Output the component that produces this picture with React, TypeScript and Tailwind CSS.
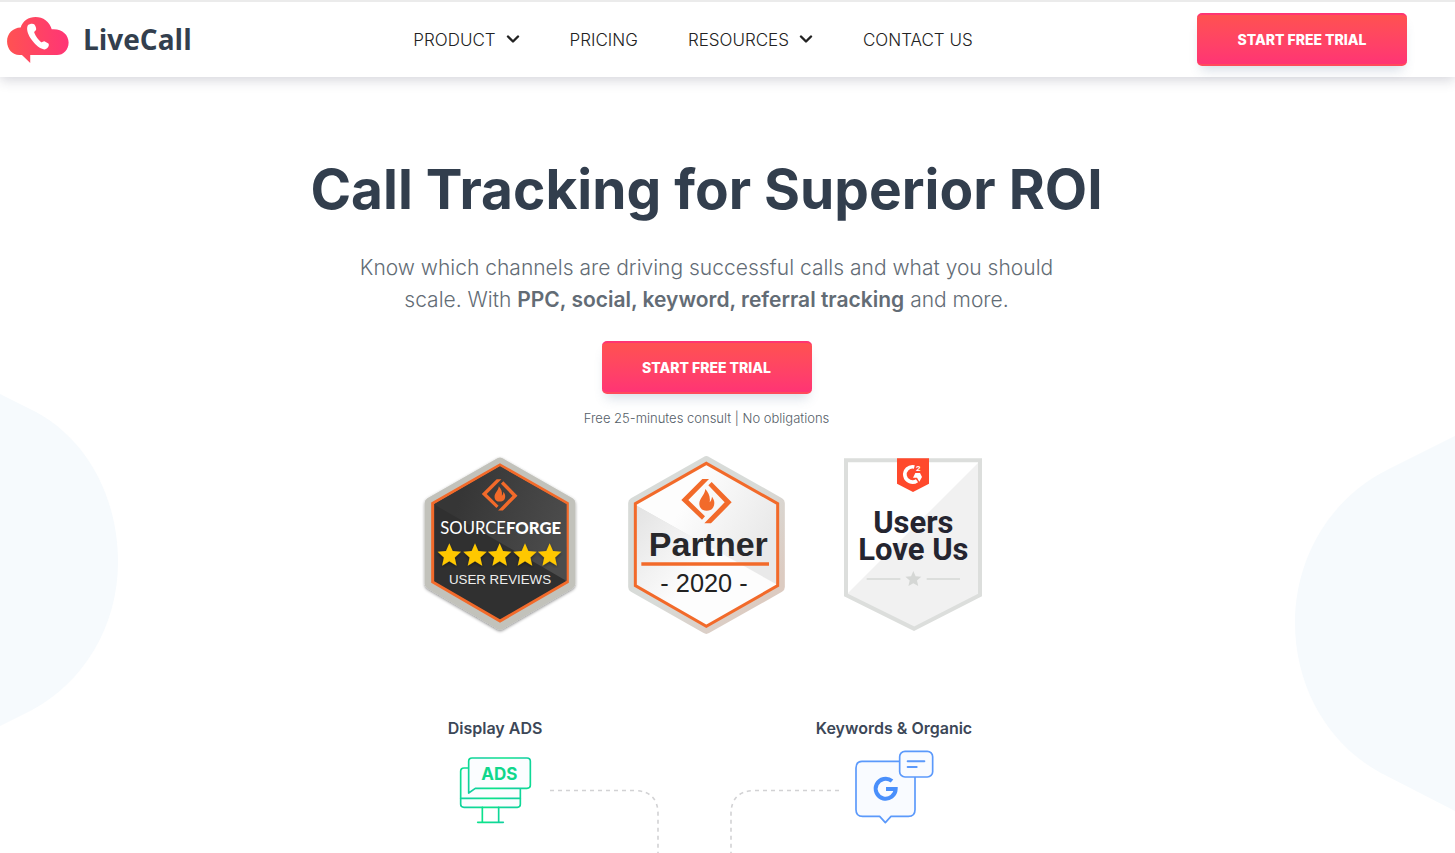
import React from "react";

function Chevron() {
  return (
    <svg width="14" height="9" viewBox="0 0 14 9" fill="none" aria-hidden="true">
      <path d="M2 1.500 7 6.500l5-5" stroke="#222" strokeWidth="2.400" strokeLinejoin="round" strokeLinecap="round" />
    </svg>
  );
}

function Logo() {
  return (
    <a href="#" className="flex items-center gap-3.5" aria-label="LiveCall">
      <svg width="62" height="46" viewBox="21 48 187 139" aria-hidden="true">
        <defs>
          <linearGradient id="cloud" x1="0" x2="1">
            <stop offset="0" stopColor="#ff5252" />
            <stop offset="1" stopColor="#ff3576" />
          </linearGradient>
        </defs>
        <path
          fill="url(#cloud)"
          d="M91 187 66 163h-8c-20 0-37-18-37-41 0-24 18-41 41-42 6-20 24-32 45-32 23 0 42 14 49 37 30-3 51 16 51 40 0 22-16 38-35 38H91Z"
        />
        <path
          fill="#fff"
          d="M84 73c5-5 15-6 19-3 4 5 6 10 6 15 0 4-7 6-6 10 4 11 13 23 21 29 4 2 6-4 11-2l11 6c4 6-2 16-11 18-20-1-50-35-53-58-1-6 0-11 2-15Z"
        />
      </svg>
      <span className="w-[106px] pb-0.5 font-['Open_Sans',sans-serif] text-[28px] leading-8 font-bold text-[#333f4e]">LiveCall</span>
    </a>
  );
}

function TrialButton() {
  return (
    <button
      type="button"
      className="h-[53px] w-[210px] cursor-pointer rounded-[5px] border-y-2 border-t-[#ff3472] border-b-[#ff4a5c] bg-linear-to-b from-[#ff5150] to-[#ff3474] text-[14px] font-extrabold text-white shadow-[0_8px_12px_-4px_rgba(70,100,140,0.22)]"
    >
      START FREE TRIAL
    </button>
  );
}

function Flame() {
  return (
    <g fill="#f26a2a">
      <path d="M262 102h20l-62 63 50 49-9 10-62-59Z" />
      <path d="m290 111 60 61-62 63h-20l61-63-49-51Z" />
      <path d="M271 132c-1 18-19 28-18 46 1 12 9 19 22 19 15 0 23-9 23-23 0-9-4-14-7-19-1 8-3 13-7 17 3-17-4-30-13-40Z" />
    </g>
  );
}

function star(cx: number, cy: number, r: number) {
  return Array.from({ length: 10 }, (_, i) => {
    const a = (Math.PI / 5) * i - Math.PI / 2;
    const d = i % 2 ? r * 0.46 : r;
    return `${cx + d * Math.cos(a)},${cy + d * Math.sin(a)}`;
  }).join(" ");
}

function ReviewsBadge() {
  return (
    <svg width="152" height="178" viewBox="42 33 456 534" className="overflow-visible" role="img" aria-label="SourceForge user reviews">
      <defs>
        <linearGradient id="dark" x1="0" y1="0.200" x2="1" y2="0.500">
          <stop offset="0.200" stopColor="#363636" />
          <stop offset="1" stopColor="#4c4c4c" />
        </linearGradient>
        <clipPath id="hexDark">
          <path d="m270 60 201 116v234L270 527 69 410V176Z" />
        </clipPath>
        <filter id="drop" x="-10%" y="-10%" width="120%" height="120%">
          <feDropShadow dx="0" dy="4" stdDeviation="4" floodOpacity="0.450" />
        </filter>
      </defs>
      <path filter="url(#drop)" d="m270 54 210 120v242L270 538 60 416V174Z" fill="#c2c2bb" stroke="#c2c2bb" strokeWidth="32" strokeLinejoin="round" />
      <path d="m270 60 202 115v236L270 528 68 411V175Z" fill="#303030" stroke="#f26a2a" strokeWidth="9" />
      <path clipPath="url(#hexDark)" d="M72 178 270 64l200 114v230Z" fill="url(#dark)" />
      <g transform="translate(74 30) scale(.71)">
        <Flame />
      </g>
      <text x="272" y="268" textAnchor="middle" fill="#fff" fontFamily="Lato, sans-serif" fontSize="50">
        SOURCE<tspan fontWeight="900">FORGE</tspan>
      </text>
      <g fill="#ffc800" filter="url(#drop)">
        {[118, 195, 269, 345, 419].map((x) => (
          <polygon key={x} points={star(x, 332, 37)} />
        ))}
      </g>
      <text x="270" y="417" textAnchor="middle" fill="#eee" fontFamily="'Liberation Sans', sans-serif" fontSize="40">
        USER REVIEWS
      </text>
    </svg>
  );
}

function PartnerBadge() {
  return (
    <svg width="157" height="178" viewBox="39 33 471 534" role="img" aria-label="SourceForge Partner 2020">
      <defs>
        <linearGradient id="rim" x1="0" y1="0" x2="1" y2="1">
          <stop offset="0.500" stopColor="#d8dbd8" />
          <stop offset="0.850" stopColor="#dccbc1" />
        </linearGradient>
        <linearGradient id="upper" x1="0" y1="0" x2="1" y2="0.500">
          <stop offset="0.400" stopColor="#fdfdfd" />
          <stop offset="1" stopColor="#e9e9e9" />
        </linearGradient>
        <linearGradient id="lower" x1="0" y1="0" x2="0.700" y2="0.500">
          <stop offset="0" stopColor="#e2e2e2" />
          <stop offset="0.800" stopColor="#fdfdfd" />
        </linearGradient>
      </defs>
      <path d="m274 50 219 124v252L274 550 56 426V174Z" fill="url(#rim)" stroke="url(#rim)" strokeWidth="33" strokeLinejoin="round" />
      <path d="m274 55 214 121v246L61 180v-4Z" fill="url(#upper)" />
      <path d="m61 180 427 240v2L274 544 61 422Z" fill="url(#lower)" />
      <path d="m274 55 214 121v246L274 544 61 422V176Z" fill="none" stroke="#f26a2a" strokeWidth="9" />
      <Flame />
      <text x="280" y="332" textAnchor="middle" fill="#28282b" fontFamily="'Liberation Sans', sans-serif" fontWeight="700" fontSize="102">
        Partner
      </text>
      <path d="M79 357h383" stroke="#f26a2a" strokeWidth="11" />
      <text x="267" y="442" textAnchor="middle" fill="#222" fontFamily="'Liberation Sans', sans-serif" fontSize="76">
        - 2020 -
      </text>
    </svg>
  );
}

function UsersBadge() {
  return (
    <svg width="138" height="178" viewBox="42 33 414 534" role="img" aria-label="G2 Users Love Us">
      <path d="M48 46h402v404L252 551 48 450Z" fill="#fff" />
      <path d="M450 48v402L252 551 48 450Z" fill="#f1f1f1" />
      <path d="M48 46h402v404L252 551 48 450Z" fill="none" stroke="#dcdedc" strokeWidth="12" />
      <path d="M201 40h96v76l-48 25-48-25Z" fill="#ff492c" />
      <path d="M253 66a23 23 0 1 0 8 41" fill="none" stroke="#fff" strokeWidth="11" />
      <path d="M256 84h14l6 12-8 14-7-12h-12Z" fill="#fff" />
      <text x="265" y="79" textAnchor="middle" fill="#fff" fontFamily="Roboto, sans-serif" fontWeight="700" fontSize="24">
        2
      </text>
      <g fill="#252530" fontFamily="Roboto, sans-serif" fontWeight="700" fontSize="93" textAnchor="middle">
        <text x="250" y="263">Users</text>
        <text x="250" y="344">Love Us</text>
      </g>
      <path d="M110 402h101M290 402h100" stroke="#dcdedc" strokeWidth="6" />
      <polygon points={star(250, 403, 25)} fill="#d5d7d5" />
    </svg>
  );
}

function AdsIcon() {
  return (
    <svg width="73" height="75" viewBox="87 150 219 225" aria-hidden="true">
      <defs>
        <linearGradient id="mint" gradientUnits="userSpaceOnUse" x1="90" y1="170" x2="150" y2="190" spreadMethod="reflect">
          <stop offset="0" stopColor="#0be48a" />
          <stop offset="1" stopColor="#12cfa0" />
        </linearGradient>
      </defs>
      <g fill="#fbfdff" stroke="url(#mint)" strokeWidth="5" strokeLinejoin="round" strokeLinecap="round">
        <path d="M116 204h-14q-10 0-10 10v99q0 9 10 9h160q9 0 9-9v-47" />
        <path d="M92 295h179M157 322v45M206 322v45M143 367h77" />
        <path d="M116 279V184q0-10 10-10h165q10 0 10 10v72q0 9-10 9H136Z" />
      </g>
      <text x="208" y="239" textAnchor="middle" fill="#10d78c" fontFamily="Inter, sans-serif" fontWeight="700" fontSize="51">
        ADS
      </text>
    </svg>
  );
}

function SearchIcon() {
  return (
    <svg width="79" height="75" viewBox="439 150 237 225" aria-hidden="true">
      <g fill="#f9fbff" stroke="#5b99fb" strokeWidth="5" strokeLinejoin="round" strokeLinecap="round">
        <path d="M462 184h137q20 0 20 20v125q0 20-20 20h-52l-17 19-17-19h-51q-20 0-20-20V204q0-20 18-20Z" />
        <rect x="573" y="154" width="99" height="77" rx="16" />
        <path d="M597 184h50M597 201h27" strokeWidth="6" />
      </g>
      <path d="M550 243a30 30 0 1 0 11 24h-29" fill="none" stroke="#4a8ffb" strokeWidth="12" />
    </svg>
  );
}

function Connector({ d }: { d: string }) {
  return (
    <svg width="109" height="64" viewBox="0 0 109 64" className="mt-[71px]" fill="none" aria-hidden="true">
      <path d={d} stroke="#d2d2d4" strokeWidth="1.600" strokeDasharray="4 4" />
    </svg>
  );
}

function Channel({ label, children }: { label: string; children: React.ReactNode }) {
  return (
    <figure className="flex w-20 flex-col items-center">
      <figcaption className="text-[16px] leading-5 font-semibold whitespace-nowrap text-[#3c4757]">{label}</figcaption>
      <div className="mt-3">{children}</div>
    </figure>
  );
}

export default function App() {
  return (
    <div className="relative overflow-hidden bg-white font-[Inter,sans-serif]">
      <svg className="absolute top-[394px] left-0" width="119" height="333" viewBox="0 0 119 333" aria-hidden="true">
        <path d="M0 0 28 14C84 40 118 100 118 168c0 64-34 120-86 148L0 332Z" fill="#f6fafd" />
      </svg>
      <svg className="absolute top-[436px] right-0" width="160" height="376" viewBox="0 0 160 376" aria-hidden="true">
        <path d="M160 0 94 33C35 62 0 122 0 187c0 65 34 122 86 150l74 38Z" fill="#f6fafd" />
      </svg>

      <header className="relative flex h-[77px] items-center justify-between border-t-2 border-[#ebebeb] bg-white pr-12 pl-[7px] shadow-[0_3px_12px_rgba(40,40,70,0.2)]">
        <Logo />
        <nav className="flex items-center gap-[50px] text-[17px] leading-6 font-light text-[#222]">
          <button type="button" className="flex cursor-pointer items-center gap-2.5">
            PRODUCT <Chevron />
          </button>
          <a href="#">PRICING</a>
          <button type="button" className="flex cursor-pointer items-center gap-2.5">
            RESOURCES <Chevron />
          </button>
          <a href="#">CONTACT US</a>
        </nav>
        <TrialButton />
      </header>

      <main className="relative flex flex-col items-center pt-20 pr-[42px]">
        <h1 className="text-center text-[55px] leading-16 font-bold text-[#323e4d]">Call Tracking for Superior ROI</h1>
        <p className="mt-[31px] text-center text-[21px] leading-8 font-light text-[#636c75]">
          Know which channels are driving successful calls and what you should
          <br />
          scale. With <strong className="font-semibold">PPC, social, keyword, referral tracking</strong> and more.
        </p>
        <div className="mt-[25px]">
          <TrialButton />
        </div>
        <p className="mt-3.5 text-[13px] leading-5 font-light text-[#555e68]">Free 25-minutes consult | No obligations</p>

        <section className="mt-7 grid w-[620px] grid-cols-3 justify-items-center" aria-label="Awards">
          <ReviewsBadge />
          <PartnerBadge />
          <UsersBadge />
        </section>

        <section className="mt-[84px] flex items-start gap-[15px] pr-6" aria-label="Channels">
          <Channel label="Display ADS">
            <AdsIcon />
          </Channel>
          <div className="flex gap-[71px]">
            <Connector d="M0 1.500H86Q108 3 108 25V64" />
            <Connector d="M109 1.500H23Q1 3 1 25V64" />
          </div>
          <Channel label="Keywords & Organic">
            <SearchIcon />
          </Channel>
        </section>
      </main>
    </div>
  );
}
